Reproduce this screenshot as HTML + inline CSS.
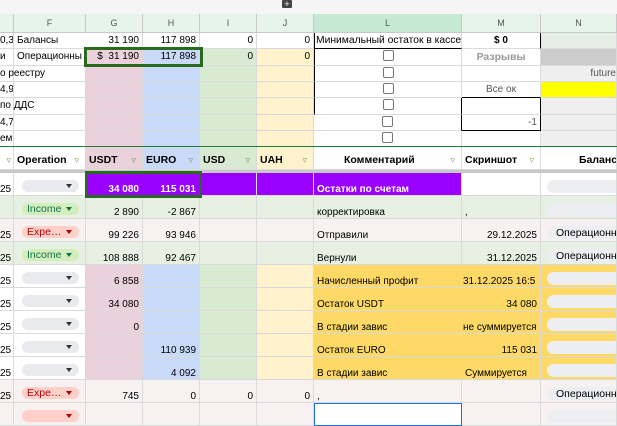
<!DOCTYPE html>
<html><head><meta charset="utf-8"><style>
body{margin:0;width:617px;height:415px;overflow:hidden;background:#fff;font-family:"Liberation Sans",Arial,sans-serif;font-size:10px;color:#000;position:relative}
.row{position:absolute;left:0;width:617px}
.row>div{position:absolute;top:0;height:100%;box-sizing:border-box;border-right:1px solid #dadada;border-bottom:1px solid #dadada;padding:0 3px;white-space:nowrap;overflow:hidden}
.e{left:0;width:14px;padding:0!important}.f{left:14px;width:72px}.g{left:86px;width:57px}.h{left:143px;width:57px}.i{left:200px;width:57px}.j{left:257px;width:57px}.l{left:314px;width:148px}.m{left:462px;width:79px}.n{left:541px;width:76px}
.row>.ov{overflow:visible;z-index:2}
.ch{top:14px;height:19px}.ch>div{background:#e6f4ea;color:#555;text-align:center;font-size:9px;line-height:19px;border-color:#c8c8c8!important}
.t{height:16px}.t>div{line-height:16px}
.fh{top:147px;height:23px}.fh>div{line-height:26px;font-weight:bold;font-size:10.5px}
.d{height:23px}.d>div{line-height:34px}
.r{text-align:right}.c{text-align:center}.b{font-weight:bold}
.pk{background:#ead1dc}.bl{background:#c9daf8}.gn{background:#d9ead3}.yl{background:#fff2cc}
.inc>div{background:#e6f0e3}.exp>div{background:#f8f1f1}
.row>.or{background:#ffd966}
.pill{position:absolute;left:8px;top:7px;width:57px;height:12px;border-radius:7px;background:#e8eaed}
.pill:after{content:"";position:absolute;right:7px;top:4px;border:3.5px solid transparent;border-top:4px solid #333;border-bottom:0}
.pi{background:#d4edbc;color:#11734b}.pi:after{border-top-color:#11734b}
.pe{background:#ffcfc9;color:#b10202}.pe:after{border-top-color:#b10202}
.pill span{position:absolute;left:5px;top:0;font-size:10.5px;line-height:13px}
.gp{position:absolute;left:6px;top:7px;width:80px;height:13px;border-radius:7px;background:#eceef1;font-size:10.5px;line-height:14px;padding-left:9px}
.cb{display:inline-block;width:9px;height:9px;border:1.5px solid #777;border-radius:2px;vertical-align:middle;margin-top:-2px}
.fi{position:absolute;right:6px;color:#6aa84f;font-weight:normal;font-size:9px}
</style></head><body>
<div style="position:absolute;left:0;top:0;width:617px;height:14px;background:#f5f5f5"></div>
<div style="position:absolute;left:282px;top:0;width:10px;height:8px;background:#444;color:#fff;font-size:9px;line-height:8px;text-align:center;border-radius:1px">+</div>

<div class="row ch"><div class="e"></div><div class="f">F</div><div class="g">G</div><div class="h">H</div><div class="i">I</div><div class="j">J</div><div class="l" style="background:#c5e9d2">L</div><div class="m">M</div><div class="n">N</div></div>

<div class="row t" style="top:33px"><div class="e">0,3</div><div class="f" style="border-right:0">Балансы</div><div class="g r">31 190</div><div class="h r">117 898</div><div class="i r">0</div><div class="j r">0</div><div class="l" style="border:1px solid #000;border-top:0;border-right-color:#dadada;padding:0 1px;font-size:10.3px">Минимальный остаток в кассе</div><div class="m c b" style="border-right:1px solid #000">$ 0</div><div class="n" style="background:#e6eee3"></div></div>
<div class="row t" style="top:49px;height:17px"><div class="e">и</div><div class="f" style="border-right:0">Операционны</div><div class="g r pk">$&nbsp; 31 190</div><div class="h r bl">117 898</div><div class="i r gn">0</div><div class="j r yl">0</div><div class="l c" style="border-left:1px solid #000"><span class="cb"></span></div><div class="m c b" style="color:#999;font-size:10.5px">Разрывы</div><div class="n" style="background:#cccccc"></div></div>
<div class="row t" style="top:66px"><div class="f"></div><div class="e ov">о реестру</div><div class="g pk"></div><div class="h bl"></div><div class="i gn"></div><div class="j yl"></div><div class="l c" style="border-left:1px solid #000"><span class="cb"></span></div><div class="m"></div><div class="n r" style="background:#efefef;color:#555;padding-right:0">future</div></div>
<div class="row t" style="top:82px"><div class="e">4,9</div><div class="f"></div><div class="g pk"></div><div class="h bl"></div><div class="i gn"></div><div class="j yl"></div><div class="l c" style="border-left:1px solid #000"><span class="cb"></span></div><div class="m c" style="color:#555;border-bottom:1px solid #000">Все ок</div><div class="n" style="background:#ffff00"></div></div>
<div class="row t" style="top:98px;height:17px"><div class="f"></div><div class="e ov">по ДДС</div><div class="g pk"></div><div class="h bl"></div><div class="i gn"></div><div class="j yl"></div><div class="l c" style="border-left:1px solid #000;border-right:1px solid #000"><span class="cb"></span></div><div class="m" style="border-right:1px solid #000"></div><div class="n" style="background:#efefef"></div></div>
<div class="row t" style="top:115px"><div class="e">4,7</div><div class="f"></div><div class="g pk"></div><div class="h bl"></div><div class="i gn"></div><div class="j yl"></div><div class="l c" style="border-right:1px solid #000"><span class="cb"></span></div><div class="m r" style="color:#555;border-right:1px solid #000;border-bottom:1px solid #000">-1</div><div class="n" style="background:#efefef"></div></div>
<div class="row t" style="top:131px"><div class="f"></div><div class="e ov">ем</div><div class="g pk"></div><div class="h bl"></div><div class="i gn"></div><div class="j yl"></div><div class="l c"><span class="cb"></span></div><div class="m"></div><div class="n" style="background:#efefef"></div></div>
<div style="position:absolute;left:0;top:146px;width:617px;height:1px;background:#1e7c3a;z-index:3"></div>

<div class="row fh"><div class="e"><span class="fi" style="right:2px">▿</span></div><div class="f">Operation<span class="fi">▿</span></div><div class="g pk">USDT<span class="fi">▿</span></div><div class="h bl">EURO<span class="fi">▿</span></div><div class="i gn">USD<span class="fi">▿</span></div><div class="j yl">UAH<span class="fi">▿</span></div><div class="l" style="padding-left:30px">Комментарий<span class="fi">▿</span></div><div class="m">Скриншот<span class="fi">▿</span></div><div class="n" style="padding-left:38px">Баланс</div></div>
<div style="position:absolute;left:0;top:170px;width:617px;height:3px;background:#c8c8c8"></div>

<div class="row d" style="top:173px"><div class="e">25</div><div class="f"><span class="pill"></span></div><div class="g r b" style="background:#9900ff;color:#fff;border-color:#9900ff">34 080</div><div class="h r b" style="background:#9900ff;color:#fff;border-color:#9900ff">115 031</div><div class="i" style="background:#9900ff"></div><div class="j" style="background:#9900ff"></div><div class="l b" style="background:#9900ff;color:#fff">Остатки по счетам</div><div class="m"></div><div class="n"><span class="gp"></span></div></div>
<div class="row d inc" style="top:196px"><div class="e"></div><div class="f"><span class="pill pi"><span>Income</span></span></div><div class="g r">2 890</div><div class="h r">-2 867</div><div class="i"></div><div class="j"></div><div class="l">корректировка</div><div class="m">,</div><div class="n"><span class="gp"></span></div></div>
<div class="row d exp" style="top:219px"><div class="e">25</div><div class="f"><span class="pill pe"><span>Expe…</span></span></div><div class="g r">99 226</div><div class="h r">93 946</div><div class="i"></div><div class="j"></div><div class="l">Отправили</div><div class="m r">29.12.2025</div><div class="n"><span class="gp">Операционны</span></div></div>
<div class="row d inc" style="top:242px"><div class="e">25</div><div class="f"><span class="pill pi"><span>Income</span></span></div><div class="g r">108 888</div><div class="h r">92 467</div><div class="i"></div><div class="j"></div><div class="l">Вернули</div><div class="m r">31.12.2025</div><div class="n"><span class="gp">Операционны</span></div></div>
<div class="row d" style="top:265px"><div class="e">25</div><div class="f"><span class="pill"></span></div><div class="g r pk">6 858</div><div class="h bl"></div><div class="i gn"></div><div class="j yl"></div><div class="l or">Начисленный профит</div><div class="m or" style="padding:0 1px">31.12.2025 16:5</div><div class="n or"><span class="gp"></span></div></div>
<div class="row d" style="top:288px"><div class="e">25</div><div class="f"><span class="pill"></span></div><div class="g r pk">34 080</div><div class="h bl"></div><div class="i gn"></div><div class="j yl"></div><div class="l or">Остаток USDT</div><div class="m or r">34 080</div><div class="n or"><span class="gp"></span></div></div>
<div class="row d" style="top:311px"><div class="e">25</div><div class="f"><span class="pill"></span></div><div class="g r pk">0</div><div class="h bl"></div><div class="i gn"></div><div class="j yl"></div><div class="l or">В стадии завис</div><div class="m or" style="padding:0 1px">не суммируется</div><div class="n or"><span class="gp"></span></div></div>
<div class="row d" style="top:334px"><div class="e">25</div><div class="f"><span class="pill"></span></div><div class="g pk"></div><div class="h r bl">110 939</div><div class="i gn"></div><div class="j yl"></div><div class="l or">Остаток EURO</div><div class="m or r">115 031</div><div class="n or"><span class="gp"></span></div></div>
<div class="row d" style="top:357px"><div class="e">25</div><div class="f"><span class="pill"></span></div><div class="g pk"></div><div class="h r bl">4 092</div><div class="i gn"></div><div class="j yl"></div><div class="l or">В стадии завис</div><div class="m or">Суммируется</div><div class="n or"><span class="gp"></span></div></div>
<div class="row d exp" style="top:380px"><div class="e">25</div><div class="f"><span class="pill pe"><span>Expe…</span></span></div><div class="g r">745</div><div class="h r">0</div><div class="i r">0</div><div class="j r">0</div><div class="l">,</div><div class="m"></div><div class="n"><span class="gp">Операционны</span></div></div>
<div class="row d exp" style="top:403px"><div class="e"></div><div class="f"><span class="pill pe"></span></div><div class="g"></div><div class="h"></div><div class="i"></div><div class="j"></div><div class="l" style="border:1px solid #1a73e8;background:#fff"></div><div class="m"></div><div class="n"><span class="gp"></span></div></div>

<div style="position:absolute;left:84px;top:47px;width:119px;height:20px;border:3px solid #2a6a1f;box-sizing:border-box;z-index:4"></div>
<div style="position:absolute;left:85px;top:171px;width:117px;height:27px;border:3px solid #2a6a1f;box-sizing:border-box;z-index:4"></div>
</body></html>
